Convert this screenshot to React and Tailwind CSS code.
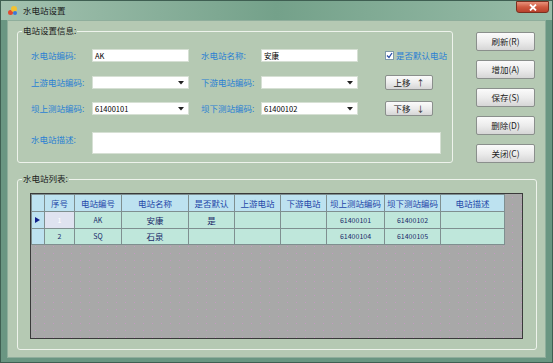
const cjk = { fontFamily: '"Noto Sans CJK SC", "Liberation Sans", sans-serif' };

function Field({ value, select, w = "w-[97px]" }) {
  return (
    <div className={`${w} h-[13px] bg-white border border-[#d6e0d4] flex items-center pl-[2px] pr-[4px] text-[7.5px] text-black`}>
      <span className="flex-1 leading-none">{value}</span>
      {select && (
        <svg width="6" height="4" viewBox="0 0 6 4"><path d="M0 0h6L3 3.5z" fill="#222" /></svg>
      )}
    </div>
  );
}

function Label({ children, w }) {
  return <div className={`${w} text-[8.5px] text-[#2a7fd4] leading-none`}>{children}</div>;
}

function SmallButton({ children, className = "" }) {
  return (
    <button className={`rounded-[2px] border border-[#8a8f8c] bg-gradient-to-b from-[#fbfbfb] via-[#ececec] to-[#d6d6d6] text-[8.5px] text-[#222] leading-none flex items-center justify-center ${className}`}>
      {children}
    </button>
  );
}

function GroupLabel({ children }) {
  return (
    <span className="absolute -top-[6px] left-[4px] px-[1px] bg-[#b5c9b3] text-[8.5px] leading-none text-[#1a1a1a]">
      {children}
    </span>
  );
}

const cols = [
  { key: "rh", w: 13, title: "" },
  { key: "no", w: 30, title: "序号" },
  { key: "code", w: 47, title: "电站编号" },
  { key: "name", w: 67, title: "电站名称" },
  { key: "def", w: 46, title: "是否默认" },
  { key: "up", w: 46, title: "上游电站" },
  { key: "down", w: 46, title: "下游电站" },
  { key: "su", w: 58, title: "坝上测站编码" },
  { key: "sd", w: 56, title: "坝下测站编码" },
  { key: "desc", w: 64, title: "电站描述" },
];

const rows = [
  { no: "1", code: "AK", name: "安康", def: "是", up: "", down: "", su: "61400101", sd: "61400102", desc: "" },
  { no: "2", code: "SQ", name: "石泉", def: "", up: "", down: "", su: "61400104", sd: "61400105", desc: "" },
];

export default function App() {
  return (
    <div className="w-[553px] h-[363px] flex flex-col bg-[#6a9682] border border-[#3f5f52] overflow-hidden" style={cjk}>
      {/* title bar */}
      <div className="h-[19px] flex items-center bg-gradient-to-r from-[#a3c2b0] via-[#74a18a] to-[#98bca8] relative">
        <div className="ml-[7px] w-[10px] h-[10px] relative">
          <span className="absolute left-0 top-[4px] w-[5px] h-[5px] rounded-full bg-[#e04830]" />
          <span className="absolute left-[3px] top-0 w-[6px] h-[6px] rounded-full bg-[#f2c230]" />
          <span className="absolute left-[5px] top-[5px] w-[4px] h-[4px] rounded-full bg-[#3a78d8]" />
        </div>
        <span className="ml-[5px] text-[8.5px] text-[#1a1a1a] leading-none">水电站设置</span>
        <div className="absolute right-[3px] top-0 w-[33px] h-[12px] rounded-b-[3px] border border-[#7a3020] bg-gradient-to-b from-[#e8927c] via-[#cf5a40] to-[#b8412c] flex items-center justify-center">
          <svg width="8" height="7" viewBox="0 0 8 7"><path d="M1 0.5L7 6.5M7 0.5L1 6.5" stroke="#fff" strokeWidth="1.8" /></svg>
        </div>
      </div>

      {/* client area */}
      <div className="flex-1 mx-[6px] mb-[4px] bg-[#b5c9b3] border border-[#8fae9c] flex flex-col">
        <div className="flex mt-[10px] ml-[9px]">
          {/* group 1 */}
          <div className="relative w-[436px] h-[132px] border border-[#eef3ec] rounded-[3px]">
            <GroupLabel>电站设置信息:</GroupLabel>
            <div className="flex flex-col pl-[13px] pt-[17px]">
              <div className="flex items-center h-[13px]">
                <Label w="w-[61px]">水电站编码:</Label>
                <Field value="AK" />
                <div className="w-[12px]" />
                <Label w="w-[60px]">水电站名称:</Label>
                <Field value="安康" />
                <div className="w-[27px]" />
                <div className="flex items-center gap-[2px]">
                  <div className="w-[9px] h-[9px] bg-white border border-[#7f9aa8] flex items-center justify-center">
                    <svg width="7" height="7" viewBox="0 0 7 7"><path d="M1 3.5L3 5.5L6 1" stroke="#2a4fa8" strokeWidth="1.3" fill="none" /></svg>
                  </div>
                  <span className="text-[8.5px] text-[#2a7fd4] leading-none">是否默认电站</span>
                </div>
              </div>
              <div className="flex items-center h-[13px] mt-[14px]">
                <Label w="w-[61px]">上游电站编码:</Label>
                <Field value="" select />
                <div className="w-[12px]" />
                <Label w="w-[60px]">下游电站编码:</Label>
                <Field value="" select />
                <div className="w-[27px]" />
                <SmallButton className="w-[48px] h-[15px] gap-[6px]">上移 <span className="text-[8px]">↑</span></SmallButton>
              </div>
              <div className="flex items-center h-[13px] mt-[13px]">
                <Label w="w-[61px]">坝上测站编码:</Label>
                <Field value="61400101" select />
                <div className="w-[12px]" />
                <Label w="w-[60px]">坝下测站编码:</Label>
                <Field value="61400102" select />
                <div className="w-[27px]" />
                <SmallButton className="w-[48px] h-[15px] gap-[6px]">下移 <span className="text-[8px]">↓</span></SmallButton>
              </div>
              <div className="flex items-start mt-[17px]">
                <div className="w-[61px] pt-[3px] text-[8.5px] text-[#2a7fd4] leading-none">水电站描述:</div>
                <div className="w-[349px] h-[22px] bg-white border border-[#d6e0d4]" />
              </div>
            </div>
          </div>

          {/* right buttons */}
          <div className="flex flex-col gap-[9px] ml-[23px] mt-[1px]">
            {["刷新(R)", "增加(A)", "保存(S)", "删除(D)", "关闭(C)"].map((t) => (
              <SmallButton key={t} className="w-[59px] h-[19px]">{t}</SmallButton>
            ))}
          </div>
        </div>

        {/* group 2 */}
        <div className="relative ml-[9px] mt-[16px] w-[520px] h-[171px] border border-[#eef3ec] rounded-[3px]">
          <GroupLabel>水电站列表:</GroupLabel>
          <div className="ml-[12px] mt-[13px] w-[493px] h-[146px] border border-[#3a3a3a] bg-[#a8a8a8] bg-[radial-gradient(#c39ac0_0.5px,transparent_0.7px)] bg-[length:9px_7px] overflow-hidden">
            <table className="table-fixed border-collapse text-[8px] leading-none">
              <colgroup>
                {cols.map((c) => (
                  <col key={c.key} style={{ width: c.w }} />
                ))}
              </colgroup>
              <thead>
                <tr className="h-[17px] bg-[#bde2f0]">
                  {cols.map((c) => (
                    <th key={c.key} className="border border-[#7f8f90] font-normal text-[#2447a8] text-[8.5px] p-0 text-center">
                      {c.title}
                    </th>
                  ))}
                </tr>
              </thead>
              <tbody>
                {rows.map((r, i) => (
                  <tr key={r.no} className={i === 0 ? "h-[17px]" : "h-[16px]"}>
                    <td className="border border-[#7f8f90] bg-[#bde2f0] p-0 pl-[3px]">
                      {i === 0 && (
                        <svg width="5" height="6" viewBox="0 0 5 6"><path d="M0 0L5 3L0 6z" fill="#10208a" /></svg>
                      )}
                    </td>
                    {cols.slice(1).map((c) => (
                      <td
                        key={c.key}
                        className={`border border-[#7f8f90] p-0 text-center ${
                          i === 0 && c.key === "no" ? "bg-[#dfe3f0] text-white" : "bg-[#bfe7db] text-[#1a2a6a]"
                        } ${c.key === "su" || c.key === "sd" || c.key === "code" || c.key === "no" ? "text-[7px]" : "text-[8.5px]"}`}
                      >
                        {r[c.key]}
                      </td>
                    ))}
                  </tr>
                ))}
              </tbody>
            </table>
          </div>
        </div>
      </div>
    </div>
  );
}
